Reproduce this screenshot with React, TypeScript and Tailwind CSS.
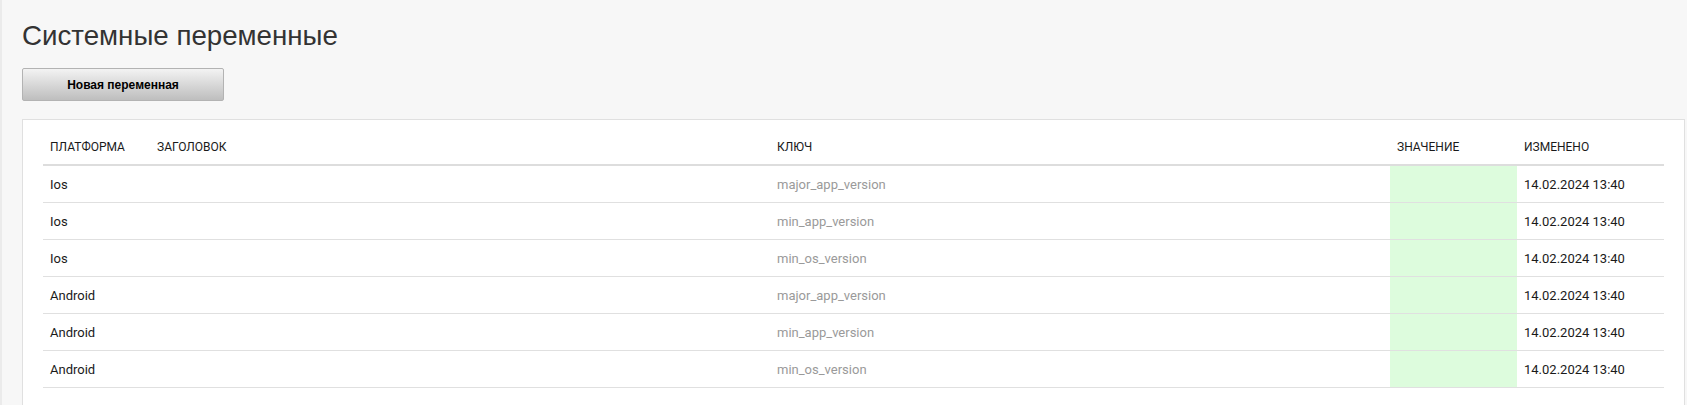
const rows = [
  { platform: 'Ios', key: 'major_app_version' },
  { platform: 'Ios', key: 'min_app_version' },
  { platform: 'Ios', key: 'min_os_version' },
  { platform: 'Android', key: 'major_app_version' },
  { platform: 'Android', key: 'min_app_version' },
  { platform: 'Android', key: 'min_os_version' },
]

export default function App() {
  return (
    <div className="flex min-h-[405px] bg-[#f7f7f7]">
      {/* left edge of sidebar */}
      <div className="w-[2px] shrink-0 bg-[#ebebeb]" />

      <main className="flex-1 pl-[20px] pr-[2px] pt-[18px]">
        <h1 className="text-[27.7px] leading-[35px] text-[#333] font-['Liberation_Sans',Arial,sans-serif] font-normal">
          Системные переменные
        </h1>

        <button className="mt-[15px] h-[33px] w-[202px] rounded-[2px] border border-[#b3b3b3] bg-gradient-to-b from-[#f3f3f3] to-[#bebebe] text-[12px] font-bold text-black font-['Liberation_Sans',Arial,sans-serif]">
          Новая переменная
        </button>

        <div className="mt-[18px] border border-[#e0e0e0] bg-white px-[20px] pt-[10px] pb-[20px] font-['Roboto',sans-serif]">
          {/* header */}
          <div className="grid h-[36px] grid-cols-[107px_1fr_1fr_127px_147px] items-start border-b-2 border-[#dddddd] text-[12px] uppercase text-[#1a1a1a]">
            <div className="pl-[7px] pt-[8px]">Платформа</div>
            <div className="pl-[7px] pt-[8px]">Заголовок</div>
            <div className="pl-[7px] pt-[8px]">Ключ</div>
            <div className="pl-[7px] pt-[8px]">Значение</div>
            <div className="pl-[7px] pt-[8px]">Изменено</div>
          </div>

          {rows.map((r, i) => (
            <div
              key={i}
              className="grid h-[37px] grid-cols-[107px_1fr_1fr_127px_147px] border-b border-[#e0e0e0] text-[13px]"
            >
              <div className="flex items-center pl-[7px] pt-[2px] text-[#1a1a1a]">{r.platform}</div>
              <div className="flex items-center pl-[7px] pt-[2px]" />
              <div className="flex items-center pl-[7px] pt-[2px] text-[#9a9a9a]">{r.key}</div>
              <div className="bg-[#ddfcdd]" />
              <div className="flex items-center pl-[7px] pt-[2px] text-[#1a1a1a]">14.02.2024 13:40</div>
            </div>
          ))}
        </div>
      </main>
    </div>
  )
}
